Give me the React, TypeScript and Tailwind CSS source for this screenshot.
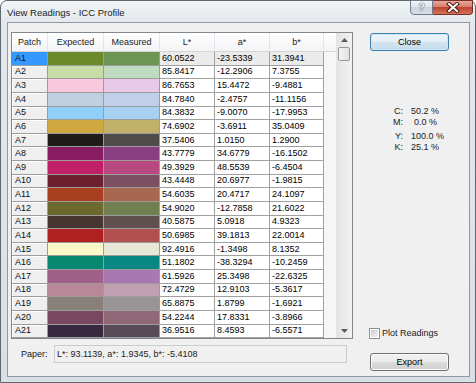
const rows: [string, string, string, string, string, string][] = [
  ["A1", "#6b8b2a", "#6c9452", "60.0522", "-23.5339", "31.3941"],
  ["A2", "#c8dca8", "#c0dcc0", "85.8417", "-12.2906", "7.3755"],
  ["A3", "#f8c8dc", "#e8c8e8", "86.7653", "15.4472", "-9.4881"],
  ["A4", "#c0d0e0", "#c0d0e8", "84.7840", "-2.4757", "-11.1156"],
  ["A5", "#90d0f8", "#a8d0f0", "84.3832", "-9.0070", "-17.9953"],
  ["A6", "#d0a840", "#c0b068", "74.6902", "-3.6911", "35.0409"],
  ["A7", "#201c1c", "#504c4c", "37.5406", "1.0150", "1.2900"],
  ["A8", "#881c60", "#884080", "43.7779", "34.6779", "-16.1502"],
  ["A9", "#c02068", "#b84880", "49.3929", "48.5539", "-6.4504"],
  ["A10", "#6c2030", "#7c5060", "43.4448", "20.6977", "-1.9815"],
  ["A11", "#a84020", "#a86850", "54.6035", "20.4717", "24.1097"],
  ["A12", "#6c6830", "#708050", "54.9020", "-12.7858", "21.6022"],
  ["A13", "#483430", "#605050", "40.5875", "5.0918", "4.9323"],
  ["A14", "#b02020", "#b05050", "50.6985", "39.1813", "22.0014"],
  ["A15", "#fcf8c8", "#e8e8d8", "92.4916", "-1.3498", "8.1352"],
  ["A16", "#088870", "#088880", "51.1802", "-38.3294", "-10.2459"],
  ["A17", "#a06088", "#a878b0", "61.5926", "25.3498", "-22.6325"],
  ["A18", "#b88898", "#c0a0b0", "72.4729", "12.9103", "-5.3617"],
  ["A19", "#888078", "#989498", "65.8875", "1.8799", "-1.6921"],
  ["A20", "#784860", "#906878", "54.2244", "17.8331", "-3.8966"],
  ["A21", "#382840", "#584c58", "36.9516", "8.4593", "-6.5571"],
];

function Row({ r, sel }: { r: (typeof rows)[number]; sel: boolean }) {
  const num = sel ? "bg-[#ebebeb]" : "bg-white";
  return (
    <div className="flex flex-1 basis-0 min-h-0">
      <div
        className={`w-[36px] flex items-center pl-[3px] border-r border-b border-[#9c9c9c] ${
          sel ? "bg-[#3399ff]" : "bg-[#efefef] shadow-[inset_1px_1px_0_#ffffff]"
        }`}
      >
        <span className="text-[9px] leading-none text-[#101010]">{r[0]}</span>
      </div>
      <div className="w-[56px] border-r border-b border-[#9c9c9c]" style={{ backgroundColor: r[1] }} />
      <div className="w-[56px] border-r border-b border-[#9c9c9c]" style={{ backgroundColor: r[2] }} />
      <div className={`w-[55px] flex items-center pl-[2px] border-r border-b border-[#a0a0a0] ${num}`}>
        <span className="text-[9px] leading-none">{r[3]}</span>
      </div>
      <div className={`w-[55px] flex items-center pl-[2px] border-r border-b border-[#a0a0a0] ${num}`}>
        <span className="text-[9px] leading-none">{r[4]}</span>
      </div>
      <div className={`w-[54px] flex items-center pl-[2px] border-r border-b border-[#a0a0a0] ${num}`}>
        <span className="text-[9px] leading-none">{r[5]}</span>
      </div>
      <div className="flex-1 bg-[#f6f6f6]" />
    </div>
  );
}

function HeadCell({ w, label }: { w: string; label: string }) {
  return (
    <div className={`${w} flex items-center justify-center border-r border-[#e2e5e9] text-[9px] leading-none text-[#222]`}>
      {label}
    </div>
  );
}

export default function App() {
  return (
    <div className="w-[476px] h-[383px] bg-white font-['Liberation_Sans',Arial,sans-serif] text-black">
      <div className="w-full h-full flex flex-col rounded-t-[7px] border border-[#5d6873] bg-[linear-gradient(180deg,#f1f3f5_0px,#e4e8ec_22px,#d9dfe5_100%)]">
        {/* Title bar */}
        <div className="h-[21px] shrink-0 flex items-start">
          <div className="pl-[6px] pt-[6px] text-[9.5px] leading-[12px] text-[#1b1b1b]">
            View Readings - ICC Profile
          </div>
          <div className="ml-auto mr-[2px] -mt-[1px] flex">
            <div className="w-[23px] h-[15px] flex items-center justify-center rounded-bl-[4px] border border-[#6f7d8b] bg-[linear-gradient(180deg,#f2f4f6,#dfe4e9_50%,#cdd4db_50%,#d9dee3)]">
              <span className="text-[11px] leading-none font-bold text-[#eef1f4] [text-shadow:0_0_1px_#4c5660,0_0_1px_#4c5660]">
                ?
              </span>
            </div>
            <div className="w-[40px] h-[15px] flex items-center justify-center rounded-br-[4px] border border-l-0 border-[#7a3128] bg-[linear-gradient(180deg,#e8a99c,#d57a69_50%,#c0442f_50%,#d4735c)]">
              <svg width="14" height="11" viewBox="0 0 14 11">
                <path d="M3 2 L11 9 M11 2 L3 9" stroke="#4a1a14" strokeWidth="4" strokeLinecap="square" />
                <path d="M3 2 L11 9 M11 2 L3 9" stroke="#ffffff" strokeWidth="2" strokeLinecap="square" />
              </svg>
            </div>
          </div>
        </div>

        {/* Client area */}
        <div className="flex-1 ml-[6px] mr-[5px] mb-[5px] border border-[#8d99a5] bg-[#f0f0f0] flex items-start pl-[3px] pt-[9px]">
          {/* Left column */}
          <div className="w-[342px] flex flex-col">
            <div className="h-[307px] border border-[#828790] bg-white flex">
              <div className="w-[324px] flex flex-col">
                <div className="h-[19px] shrink-0 flex border-b border-[#d5d5d5] bg-[linear-gradient(180deg,#ffffff,#f3f4f6)]">
                  <HeadCell w="w-[36px]" label="Patch" />
                  <HeadCell w="w-[56px]" label="Expected" />
                  <HeadCell w="w-[56px]" label="Measured" />
                  <HeadCell w="w-[55px]" label="L*" />
                  <HeadCell w="w-[55px]" label="a*" />
                  <HeadCell w="w-[54px]" label="b*" />
                  <div className="flex-1" />
                </div>
                <div className="flex-1 flex flex-col">
                  {rows.map((r, i) => (
                    <Row key={r[0]} r={r} sel={i === 0} />
                  ))}
                </div>
              </div>
              {/* Scrollbar */}
              <div className="w-[16px] flex flex-col bg-[linear-gradient(90deg,#e3e3e3,#f2f2f2)]">
                <div className="h-[14px] shrink-0 flex items-center justify-center">
                  <svg width="7" height="4" viewBox="0 0 7 4">
                    <path d="M0 4 L3.5 0 L7 4 Z" fill="#5a5a5a" />
                  </svg>
                </div>
                <div className="h-[14px] shrink-0 mx-[2px] rounded-[2px] border border-[#979797] bg-[linear-gradient(90deg,#f4f4f4,#e2e2e2)]" />
                <div className="flex-1" />
                <div className="h-[14px] shrink-0 flex items-center justify-center">
                  <svg width="7" height="4" viewBox="0 0 7 4">
                    <path d="M0 0 L7 0 L3.5 4 Z" fill="#5a5a5a" />
                  </svg>
                </div>
              </div>
            </div>
            {/* Paper row */}
            <div className="mt-[6px] h-[18px] flex items-center">
              <div className="w-[43px] pl-[10px] text-[9px] leading-none text-[#222]">Paper:</div>
              <div className="w-[293px] h-[18px] flex items-center pl-[2px] border border-[#cccccc] bg-[#f0f0f0] text-[9px] leading-none text-[#222]">
                L*: 93.1139, a*: 1.9345, b*: -5.4108
              </div>
            </div>
          </div>

          {/* Right column */}
          <div className="ml-[17px] mt-[1px] w-[79px] h-[338px] flex flex-col">
            <div className="h-[18px] shrink-0 flex items-center justify-center rounded-[3px] border border-[#3c7fb1] bg-[linear-gradient(180deg,#eef5fa,#e2eef6_50%,#d2e4f0_50%,#c6dcea)] shadow-[inset_0_0_0_1px_#cfe7f7] text-[9px] leading-none text-black">
              Close
            </div>
            <div className="mt-[55px] ml-[9px] grid grid-cols-[24px_auto] gap-x-[8px] text-[9px] leading-[11px] text-[#222]">
              <div className="text-right">C:</div>
              <div>50.2 %</div>
              <div className="text-right">M:</div>
              <div className="pl-[3px]">0.0 %</div>
              <div className="text-right mt-[3px]">Y:</div>
              <div className="mt-[3px]">100.0 %</div>
              <div className="text-right">K:</div>
              <div>25.1 %</div>
            </div>
            <div className="mt-auto -ml-[1px] flex items-center">
              <div className="w-[11px] h-[11px] border border-[#8e8f8f] bg-white p-[1px]">
                <div className="w-full h-full bg-[linear-gradient(135deg,#cbcbcb,#f4f4f4)]" />
              </div>
              <span className="ml-[2px] text-[9px] leading-none text-[#222]">Plot Readings</span>
            </div>
            <div className="mt-[14px] h-[18px] shrink-0 flex items-center justify-center rounded-[3px] border border-[#707070] bg-[linear-gradient(180deg,#f2f2f2,#ebebeb_50%,#dddddd_50%,#cfcfcf)] shadow-[inset_0_0_0_1px_#fbfbfb] text-[9px] leading-none text-black">
              Export
            </div>
          </div>
        </div>
      </div>
    </div>
  );
}
